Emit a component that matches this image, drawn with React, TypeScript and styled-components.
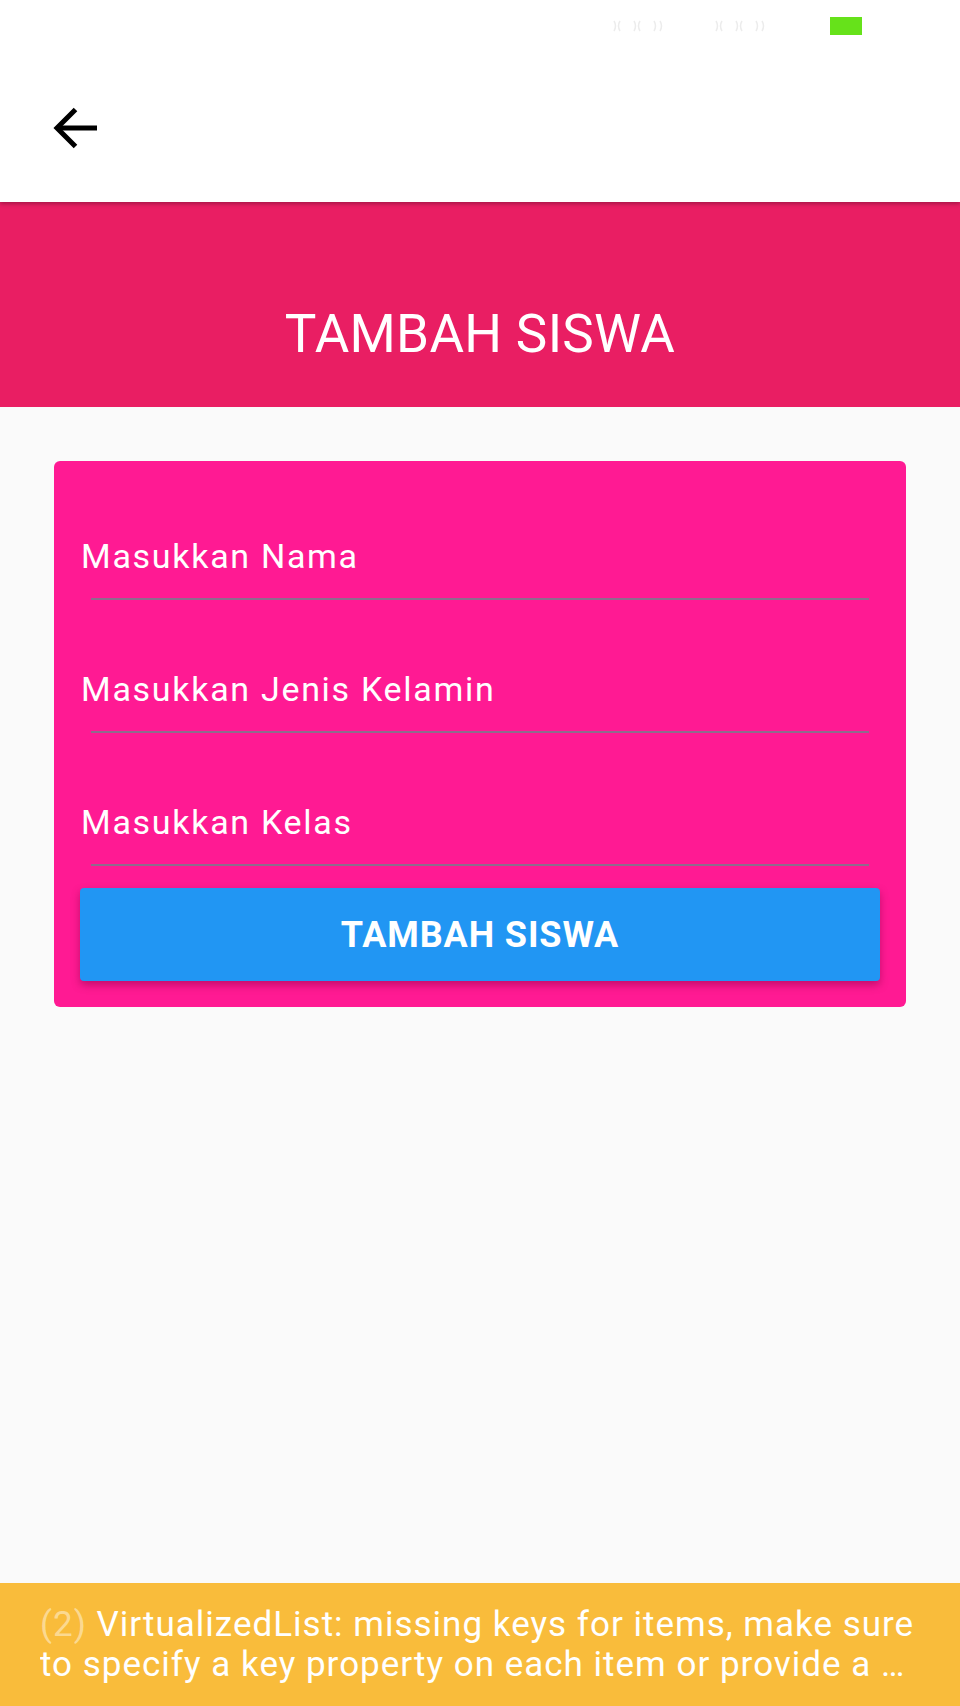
import React from "react";
import styled, { createGlobalStyle } from "styled-components";

const GlobalStyle = createGlobalStyle`
  html, body {
    margin: 0;
    padding: 0;
    background: #fafafa;
    font-family: Roboto, "Noto Sans", "Liberation Sans", sans-serif;
  }
  * { box-sizing: border-box; }
`;

const Screen = styled.div`
  min-height: 100vh;
  display: flex;
  flex-direction: column;
  background: #fafafa;
`;

const Header = styled.header`
  background: #ffffff;
  height: 202px;
  display: flex;
  flex-direction: column;
  position: relative;
  z-index: 2;
  box-shadow: 0 2px 4px rgba(0, 0, 0, 0.28);
`;

const StatusBar = styled.div`
  height: 52px;
  display: flex;
  align-items: center;
  justify-content: flex-end;
  padding-right: 98px;
  gap: 44px;
`;

const FaintIcon = styled.svg`
  display: block;
`;

const Battery = styled.div`
  width: 32px;
  height: 18px;
  background: #66e21a;
  margin-left: 14px;
`;

const AppBar = styled.div`
  flex: 1;
  display: flex;
  align-items: center;
  padding-left: 53px;
  padding-top: 4px;
`;

const BackButton = styled.button`
  border: 0;
  background: transparent;
  padding: 0;
  display: flex;
  cursor: pointer;
`;

const TitleBand = styled.div`
  background: #e91e63;
  height: 205px;
  padding-top: 106px;
  text-align: center;
`;

const Title = styled.h1`
  margin: 0;
  color: #ffffff;
  font-weight: 400;
  font-size: 53px;
  line-height: 53px;
  letter-spacing: 0.3px;
`;

const Content = styled.main`
  flex: 1;
  padding: 54px 54px 0;
`;

const Card = styled.form`
  background: #ff1a93;
  border-radius: 6px;
  padding: 6px 26px 26px;
  display: flex;
  flex-direction: column;
`;

const Field = styled.label`
  height: 133px;
  display: flex;
  flex-direction: column;
  justify-content: flex-end;
`;

const Placeholder = styled.span`
  color: #ffffff;
  font-size: 34px;
  line-height: 40px;
  letter-spacing: 1.7px;
  padding-left: 1px;
  margin-bottom: 22px;
`;

const Underline = styled.span`
  display: block;
  height: 2px;
  margin: 0 11px;
  background: #8e6b8d;
`;

const SubmitButton = styled.button`
  margin-top: 22px;
  height: 93px;
  border: 0;
  border-radius: 4px;
  background: #2196f3;
  color: #ffffff;
  font-family: Roboto, "Noto Sans", "Liberation Sans", sans-serif;
  font-weight: 700;
  font-size: 36px;
  letter-spacing: 0.9px;
  text-transform: uppercase;
  box-shadow: 0 4px 8px rgba(120, 0, 60, 0.45);
  cursor: pointer;
`;

const WarningBar = styled.div`
  background: #f9bc3b;
  height: 123px;
  padding: 22px 30px 0 40px;
  color: #ffffff;
  font-size: 35px;
  line-height: 40px;
  letter-spacing: 1px;
`;

const WarningLine = styled.div`
  white-space: nowrap;
  overflow: hidden;
`;

const Count = styled.span`
  color: rgba(255, 255, 255, 0.45);
`;

const faint = "#ececec";

const SignalMarks = () => (
  <FaintIcon width="58" height="16" viewBox="0 0 58 16" fill="none">
    <path d="M2 3 Q5 8 2 13" stroke={faint} strokeWidth="1.5" />
    <path d="M8 3 Q5 8 8 13" stroke={faint} strokeWidth="1.5" />
    <path d="M22 3 Q25 8 22 13" stroke={faint} strokeWidth="1.5" />
    <path d="M28 3 Q25 8 28 13" stroke={faint} strokeWidth="1.5" />
    <path d="M42 3 Q45 8 42 13" stroke={faint} strokeWidth="1.5" />
    <path d="M48 3 Q51 8 48 13" stroke={faint} strokeWidth="1.5" />
  </FaintIcon>
);

const BackArrow = () => (
  <svg width="46" height="44" viewBox="0 0 46 44" fill="none">
    <path d="M44 21 H5" stroke="#000" strokeWidth="5" />
    <path d="M22.5 2.5 L4 21 L22.5 39.5" stroke="#000" strokeWidth="5" strokeLinejoin="miter" />
  </svg>
);

const fields = ["Masukkan Nama", "Masukkan Jenis Kelamin", "Masukkan Kelas"];

export default function App() {
  return (
    <>
      <GlobalStyle />
      <Screen>
        <Header>
          <StatusBar>
            <SignalMarks />
            <SignalMarks />
            <Battery />
          </StatusBar>
          <AppBar>
            <BackButton aria-label="Kembali">
              <BackArrow />
            </BackButton>
          </AppBar>
        </Header>
        <TitleBand>
          <Title>TAMBAH SISWA</Title>
        </TitleBand>
        <Content>
          <Card onSubmit={(e) => e.preventDefault()}>
            {fields.map((f) => (
              <Field key={f}>
                <Placeholder>{f}</Placeholder>
                <Underline />
              </Field>
            ))}
            <SubmitButton type="submit">Tambah Siswa</SubmitButton>
          </Card>
        </Content>
        <WarningBar>
          <WarningLine>
            <Count>(2)</Count> VirtualizedList: missing keys for items, make sure
          </WarningLine>
          <WarningLine>to specify a key property on each item or provide a …</WarningLine>
        </WarningBar>
      </Screen>
    </>
  );
}
